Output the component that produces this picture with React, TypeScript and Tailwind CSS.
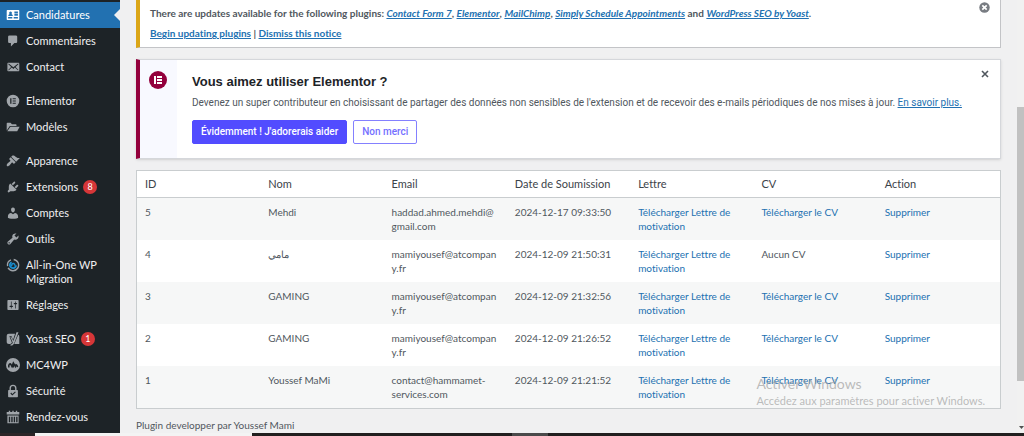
import React from "react";

type MenuItem = {
  label: string;
  icon: React.ReactNode;
  badge?: number;
  active?: boolean;
};

const Icon = ({ children }: { children: React.ReactNode }) => (
  <svg viewBox="0 0 20 20" className="h-4 w-4 shrink-0 p-px" fill="currentColor" fillRule="evenodd">
    {children}
  </svg>
);

const menu: MenuItem[][] = [
  [
    {
      label: "Candidatures",
      active: true,
      icon: (
        <Icon>
          <path d="M2 3h16q1 0 1 1v12q0 1-1 1H2q-1 0-1-1V4q0-1 1-1zM12 5v2h5V5zM12 8v3h5V8zM3 13v2h6v-2zM11 13v2h6v-2zM3.200 11.500H9.800Q9.700 9 7.800 8.600A2 2 0 1 0 5.200 8.600Q3.300 9 3.200 11.500z" />
        </Icon>
      ),
    },
    {
      label: "Commentaires",
      icon: (
        <Icon>
          <path d="M5 2h9q.82 0 1.410.590T16 4v7q0 .820-.590 1.410T14 13h-2l-5 5v-5H5q-.820 0-1.410-.590T3 11V4q0-.820.590-1.410T5 2z" />
        </Icon>
      ),
    },
    {
      label: "Contact",
      icon: (
        <Icon>
          <path d="M19 14.500v-9c0-.830-.670-1.500-1.500-1.500H3.490c-.830 0-1.500.670-1.500 1.500v9c0 .830.670 1.500 1.500 1.500H17.500c.830 0 1.500-.670 1.500-1.500zm-1.310-9.110c.330.330.150.670-.030.840L13.600 9.950l3.900 4.060c.120.140.200.360.060.510-.130.160-.430.150-.560.050l-4.370-3.730-2.140 1.950-2.130-1.950-4.370 3.730c-.130.100-.430.110-.560-.050-.140-.150-.060-.370.060-.510l3.900-4.060-4.060-3.720c-.180-.170-.360-.510-.030-.840s.670-.170.950.070l6.240 5.040 6.250-5.040c.280-.240.620-.400.950-.070z" />
        </Icon>
      ),
    },
  ],
  [
    {
      label: "Elementor",
      icon: (
        <Icon>
          <path d="M10 1a9 9 0 1 0 0 18a9 9 0 0 0 0-18zM6 6h1.800v8H6zM9.500 6H14v1.600H9.500zM9.500 9.200H14v1.600H9.500zM9.500 12.400H14V14H9.500z" />
        </Icon>
      ),
    },
    {
      label: "Modèles",
      icon: (
        <Icon>
          <path d="M1 15V5q0-1 1-1h4.500l2 2H14q1 0 1 1v1.500H5.500zM6.300 9.800H19.500L16 16H1.800z" />
        </Icon>
      ),
    },
  ],
  [
    {
      label: "Apparence",
      icon: (
        <Icon>
          <path d="M14.480 11.060L7.410 3.990l1.500-1.500c.500-.560 2.300-.470 3.510.320 1.210.800 1.430 1.280 2.910 2.100 1.180.640 2.450 1.260 4.450.850zm-.710.710L6.700 4.700 4.930 6.470c-.390.390-.390 1.020 0 1.410l1.060 1.060c.390.390.390 1.030 0 1.420-.600.600-1.430 1.110-2.210 1.690-.350.260-.700.530-1.010.840C1.430 14.230.400 16.080 1.400 17.070c.990 1 2.840-.030 4.180-1.360.310-.310.580-.660.850-1.020.570-.780 1.080-1.610 1.690-2.210.390-.390 1.020-.390 1.410 0l1.060 1.060c.390.390 1.020.390 1.410 0z" />
        </Icon>
      ),
    },
    {
      label: "Extensions",
      badge: 8,
      icon: (
        <Icon>
          <path d="M13.110 4.360L9.870 7.600 8 5.730l3.240-3.240c.350-.340 1.050-.200 1.560.320.520.510.660 1.210.310 1.550zm-8 1.770l.910-1.120 9.010 9.010-1.190.840c-.710.710-2.630 1.160-3.820 1.160H6.140L4.900 17.260c-.590.590-1.540.590-2.120 0-.590-.580-.590-1.530 0-2.120l1.240-1.240v-3.880c0-1.130.400-3.190 1.090-3.890zm7.260 3.970l3.240-3.240c.340-.350 1.040-.210 1.550.310.520.510.660 1.210.310 1.550l-3.240 3.250z" />
        </Icon>
      ),
    },
    {
      label: "Comptes",
      icon: (
        <Icon>
          <path d="M10 9.250c-2.270 0-2.730-3.440-2.730-3.440C7 4.020 7.820 2 9.970 2c2.160 0 2.980 2.020 2.710 3.810 0 0-.410 3.440-2.680 3.440zm0 2.570L12.720 10c2.390 0 4.520 2.330 4.520 4.530v2.490s-3.650 1.130-7.240 1.130c-3.650 0-7.240-1.130-7.240-1.130v-2.490c0-2.250 1.940-4.480 4.470-4.480z" />
        </Icon>
      ),
    },
    {
      label: "Outils",
      icon: (
        <Icon>
          <path d="M16.680 9.770c-1.340 1.340-3.300 1.670-4.950.990l-5.410 6.520c-.990.990-2.590.990-3.580 0s-.990-2.590 0-3.570l6.520-5.420c-.680-1.650-.350-3.610.990-4.950 1.280-1.280 3.120-1.620 4.720-1.060l-2.890 2.890 2.820 2.820 2.860-2.870c.530 1.580.180 3.390-1.080 4.650zM3.810 16.210c.400.390 1.040.390 1.430 0 .400-.400.400-1.040 0-1.430-.390-.400-1.030-.400-1.430 0-.390.390-.390 1.030 0 1.430z" />
        </Icon>
      ),
    },
    {
      label: "All-in-One WP Migration",
      icon: (
        <Icon>
          <g fill="none">
            <path d="M11 2.200A8 8 0 1 1 3 14" stroke="#9ca2a7" strokeWidth="2" />
            <path d="M2.300 11.500A8 8 0 0 1 7 2.700" stroke="#9ca2a7" strokeWidth="2" />
            <path d="M8 6A4.500 4.500 0 1 0 14.500 10.500" stroke="#1a8fd0" strokeWidth="2.600" />
            <path d="M8.500 11.500A2.300 2.300 0 1 1 12.500 11" stroke="#1a8fd0" strokeWidth="2" />
          </g>
        </Icon>
      ),
    },
    {
      label: "Réglages",
      icon: (
        <Icon>
          <path d="M18 16V4c0-.550-.450-1-1-1H3c-.550 0-1 .450-1 1v12c0 .550.450 1 1 1h14c.550 0 1-.450 1-1zM8 11h1c.550 0 1 .450 1 1s-.450 1-1 1H8v1.500c0 .280-.220.500-.500.500s-.500-.220-.500-.500V13H6c-.550 0-1-.450-1-1s.450-1 1-1h1V5.500c0-.280.220-.500.500-.500s.500.220.500.500V11zm5-2h-1c-.550 0-1-.450-1-1s.450-1 1-1h1V5.500c0-.280.220-.500.500-.500s.500.220.500.500V7h1c.550 0 1 .450 1 1s-.450 1-1 1h-1v5.500c0 .280-.220.500-.500.500s-.500-.220-.500-.500V9z" />
        </Icon>
      ),
    },
  ],
  [
    {
      label: "Yoast SEO",
      badge: 1,
      icon: (
        <Icon>
          <path d="M4 2.500H13L10 11.500 8 6H4.800L8.500 15.500Q7.800 17 6 17H4Q1 17 1 14.500v-9Q1 2.500 4 2.500zM17.500 4Q19 4.500 19 6.500V17H11.800z" />
          <path d="M15 .5H17.800L11.600 16.500Q10 19.800 6.500 19.800V17.800Q8.900 17.600 9.700 15.200L6.200 7H7.600L10.500 13z" />
        </Icon>
      ),
    },
    {
      label: "MC4WP",
      icon: (
        <Icon>
          <circle cx="10" cy="10" r="10" />
          <path
            d="M4 13.500V10.500Q5 8 6.500 8.500L8.500 12 10.500 7 13.500 12 14.500 9.500Q16 10 16.500 13M10.500 13.500V8"
            fill="none"
            stroke="#1d2327"
            strokeWidth="2.200"
          />
        </Icon>
      ),
    },
    {
      label: "Sécurité",
      icon: (
        <Icon>
          <path d="M4 8.500H5V6a5 5 0 0 1 10 0v2.500h1q1 0 1 1V18q0 1-1 1H4q-1 0-1-1V9.500q0-1 1-1zM7 8.500h6V6a3 3 0 0 0-6 0zM6.200 13.500L9 16.500 14 11.800 12.900 10.700 9.100 14.200 7.400 12.300z" />
        </Icon>
      ),
    },
    {
      label: "Rendez-vous",
      icon: (
        <Icon>
          <path d="M1 3h3V1h2v2h3V1h2v2h3V1h2v2h3v3.500H1zM2 8h16v11H2zM4 9.500v8h2v-8zM7.500 9.500v8h2v-8zM11 9.500v8h2v-8zM14.500 9.500v8h2v-8z" />
        </Icon>
      ),
    },
  ],
];

const plugins = ["Contact Form 7", "Elementor", "MailChimp", "Simply Schedule Appointments"];

const columns = ["ID", "Nom", "Email", "Date de Soumission", "Lettre", "CV", "Action"];

const rows = [
  { id: 5, nom: "Mehdi", email: "haddad.ahmed.mehdi@gmail.com", date: "2024-12-17 09:33:50", cv: true },
  { id: 4, nom: "مامي", email: "mamiyousef@atcompany.fr", date: "2024-12-09 21:50:31", cv: false },
  { id: 3, nom: "GAMING", email: "mamiyousef@atcompany.fr", date: "2024-12-09 21:32:56", cv: true },
  { id: 2, nom: "GAMING", email: "mamiyousef@atcompany.fr", date: "2024-12-09 21:26:52", cv: true },
  { id: 1, nom: "Youssef MaMi", email: "contact@hammamet-services.com", date: "2024-12-09 21:21:52", cv: true },
];

const Sidebar = () => (
  <nav className="flex w-[120px] shrink-0 flex-col gap-2 overflow-hidden bg-[#1d2327] pt-[2px] text-[11px] leading-[14px] text-[#f0f0f1]">
    {menu.map((group, i) => (
      <ul key={i}>
        {group.map((item) => (
          <li key={item.label}>
            <a
              href="#"
              className={`relative flex items-start gap-[5px] py-[6px] pl-[5px] ${
                item.active ? "bg-[#2271b1] text-white" : ""
              }`}
            >
              <span className={`-my-px ${item.active ? "text-white" : "text-[#a0a5aa]"}`}>{item.icon}</span>
              <span>{item.label}</span>
              {item.badge && (
                <span className="h-[14px] w-[14px] rounded-full bg-[#d63638] text-center text-[9px] text-white">
                  {item.badge}
                </span>
              )}
              {item.active && (
                <span className="absolute top-[7px] right-0 border-6 border-l-0 border-transparent border-r-[#f0f0f1]" />
              )}
            </a>
          </li>
        ))}
      </ul>
    ))}
  </nav>
);

const UpdateNotice = () => (
  <div className="flex items-start justify-between border border-t-0 border-l-4 border-[#c3c4c7] border-l-[#dba617] bg-white pr-[10px] pb-[7px] pl-[10px] font-bold">
    <div>
      <p className="pt-[6px]">
        There are updates available for the following plugins:{" "}
        {plugins.map((name, i) => (
          <React.Fragment key={name}>
            <a href="#" className="text-[#2271b1] italic underline">
              {name}
            </a>
            {i < plugins.length - 1 ? ", " : " "}
          </React.Fragment>
        ))}
        and{" "}
        <a href="#" className="text-[#2271b1] italic underline">
          WordPress SEO by Yoast
        </a>
        .
      </p>
      <p className="pt-[6px]">
        <a href="#" className="text-[#2271b1] underline">
          Begin updating plugins
        </a>{" "}
        |{" "}
        <a href="#" className="text-[#2271b1] underline">
          Dismiss this notice
        </a>
      </p>
    </div>
    <button aria-label="Dismiss" className="pt-[2px] text-[#787c82]">
      <svg viewBox="0 0 20 20" className="h-[11px] w-[11px]" fill="currentColor">
        <circle cx="10" cy="10" r="9.500" />
        <path d="M6 6l8 8M14 6l-8 8" stroke="#fff" strokeWidth="3" />
      </svg>
    </button>
  </div>
);

const ElementorNotice = () => (
  <div className="mt-[11px] flex border border-l-4 border-[#d5d7db] border-l-[#93003c] bg-white font-['Roboto',sans-serif] shadow-sm">
    <div className="w-[37px] shrink-0 bg-[#f8f9ff] pt-[11px] pl-[9px]">
      <svg viewBox="0 0 18 18" className="h-[18px] w-[18px]">
        <circle cx="9" cy="9" r="9" fill="#93003c" />
        <path d="M5 5h2v8H5zM8 5h5v2H8zM8 8h5v2H8zM8 11h5v2H8z" fill="#fff" />
      </svg>
    </div>
    <div className="flex-1 py-[14px] pl-[15px]">
      <h3 className="font-['Liberation_Sans',sans-serif] text-[13px] leading-4 font-bold text-[#1d2327]">
        Vous aimez utiliser Elementor ?
      </h3>
      <p className="mt-[6px]">
        Devenez un super contributeur en choisissant de partager des données non sensibles de l'extension et de
        recevoir des e-mails périodiques de nos mises à jour.{" "}
        <a href="#" className="text-[#2271b1] underline">
          En savoir plus.
        </a>
      </p>
      <div className="mt-[10px] flex gap-[6px] font-medium">
        <button className="h-6 rounded-xs border border-[#524cff] bg-[#524cff] px-2 text-white">
          Évidemment ! J'adorerais aider
        </button>
        <button className="h-6 rounded-xs border border-[#8480ff] px-2 text-[#746fff]">Non merci</button>
      </div>
    </div>
    <button aria-label="Fermer" className="self-start pt-[10px] pr-[11px] text-[#50575e]">
      <svg viewBox="0 0 8 8" className="h-2 w-2" stroke="currentColor" strokeWidth="1.600">
        <path d="M1 1l6 6M7 1l-6 6" />
      </svg>
    </button>
  </div>
);

const CandidaturesTable = () => (
  <table className="mt-[11px] w-full table-fixed border-separate border-spacing-0 border border-[#c9cdcf] bg-white text-left">
    <thead>
      <tr className="text-[11px]">
        {columns.map((column) => (
          <th key={column} className="border-b border-[#c9cdcf] px-2 py-[6px] font-normal text-[#3c434a]">
            {column}
          </th>
        ))}
      </tr>
    </thead>
    <tbody className="align-top text-[#50575e]">
      {rows.map((row) => (
        <tr key={row.id} className="odd:bg-[#f6f7f7]">
          <td className="px-2 py-[7px]">{row.id}</td>
          <td className="px-2 py-[7px]">{row.nom}</td>
          <td className="px-2 py-[7px] wrap-break-word">{row.email}</td>
          <td className="px-2 py-[7px] whitespace-nowrap">{row.date}</td>
          <td className="px-2 py-[7px]">
            <a href="#" className="text-[#2271b1]">
              Télécharger Lettre de motivation
            </a>
          </td>
          <td className="px-2 py-[7px]">
            {row.cv ? (
              <a href="#" className="text-[#2271b1]">
                Télécharger le CV
              </a>
            ) : (
              "Aucun CV"
            )}
          </td>
          <td className="px-2 py-[7px]">
            <a href="#" className="text-[#2271b1]">
              Supprimer
            </a>
          </td>
        </tr>
      ))}
    </tbody>
  </table>
);

const App = () => {
  return (
    <div className="relative flex h-screen flex-col overflow-hidden bg-[#f0f0f1] font-['Lato','Noto_Sans',sans-serif] [font-variant-ligatures:none]">
      <div className="flex min-h-0 flex-1">
        <Sidebar />
        <main className="min-w-0 flex-1 overflow-hidden pr-4 pl-4 text-[10px] leading-[14px] text-[#50575e]">
          <UpdateNotice />
          <ElementorNotice />
          <CandidaturesTable />
          <p className="mt-[9px]">Plugin developper par Youssef Mami</p>
        </main>
        {/* scrollbar */}
        <div className="flex w-[7px] shrink-0 flex-col bg-[#f1f1f1]">
          <div className="flex-[108]" />
          <div className="flex-[277] bg-[#c1c1c1]" />
          <div className="flex flex-[48] items-end justify-end pb-1">
            <svg viewBox="0 0 5 3" className="h-[3px] w-[5px]" fill="#505050">
              <path d="M0 0h5L2.500 3z" />
            </svg>
          </div>
        </div>
      </div>
      {/* taskbar */}
      <div className="flex h-[3px] shrink-0 bg-[#211f1f]">
        <div className="w-[35px] bg-[#2b2527]" />
        <div className="w-[217px] bg-[#f3f3f3]" />
        <div className="ml-[260px] w-[36px] bg-[#4a4a4a]" />
      </div>
      <div className="pointer-events-none absolute right-[39px] bottom-[27px] text-[#a0a0a0]/70">
        <p className="text-[14px] leading-[18px]">Activer Windows</p>
        <p className="text-[11px] leading-4">Accédez aux paramètres pour activer Windows.</p>
      </div>
    </div>
  );
};

export default App;
